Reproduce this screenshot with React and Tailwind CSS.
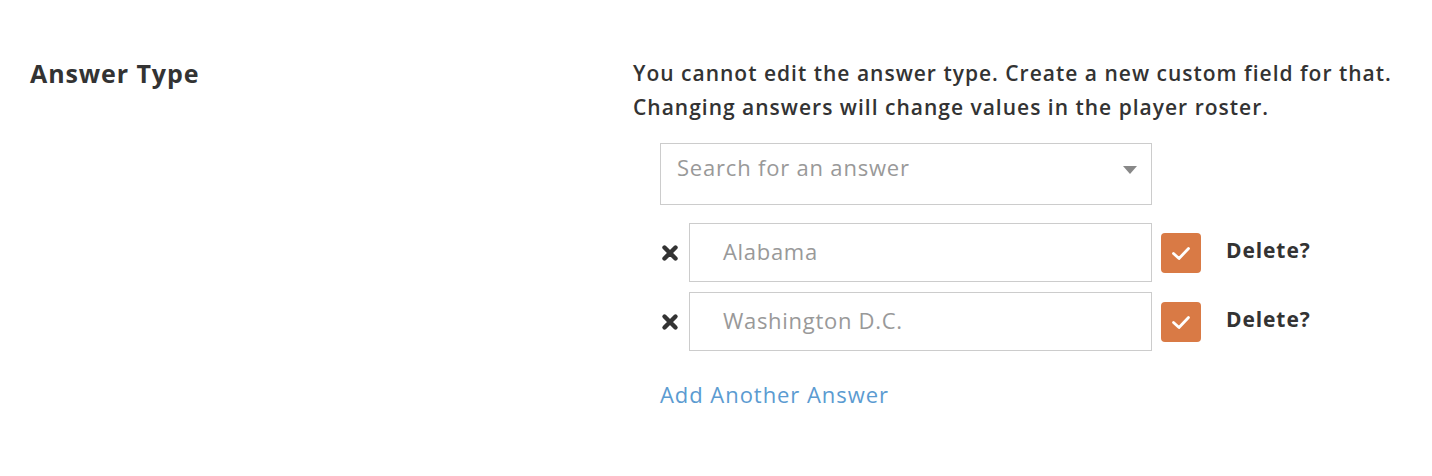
import React from 'react';

const answers = ['Alabama', 'Washington D.C.'];

const AnswerRow = ({ value }) => (
  <div className="flex items-center">
    <span className="w-[29px] shrink-0 pl-[1px] text-[#333]">
      <svg width="18" height="18" viewBox="0 0 18 18">
        <path d="M3.5 3.5 L14.5 14.5 M14.5 3.5 L3.5 14.5" stroke="#333" strokeWidth="4.4" strokeLinecap="round" />
      </svg>
    </span>
    <div className="flex h-[59px] w-[463px] items-center border border-[#ccc] pb-[2px] pl-[33px] text-[22px] tracking-[0.7px] text-[#999]">
      {value}
    </div>
    <span className="ml-[9px] flex h-[40px] w-[40px] items-center justify-center rounded-[4px] bg-[#d97a45]">
      <svg width="22" height="18" viewBox="0 0 22 18">
        <path d="M3.5 9.5 L9 14.5 L18.5 4.5" fill="none" stroke="#fff" strokeWidth="2.8" strokeLinecap="round" strokeLinejoin="round" />
      </svg>
    </span>
    <span className="ml-[25px] pb-[3px] text-[21px] font-bold tracking-[0.9px] text-[#333]">Delete?</span>
  </div>
);

export default function App() {
  return (
    <div className="flex bg-white pt-[56px] pl-[30px] font-['Open_Sans',sans-serif] text-[#333]">
      <div className="w-[603px] shrink-0 text-[25px] font-bold leading-[34px] tracking-[0.9px]">Answer Type</div>
      <div className="flex flex-col">
        <p className="text-[21px] font-semibold leading-[34px] tracking-[1px]">
          You cannot edit the answer type. Create a new custom field for that.
          <br />
          Changing answers will change values in the player roster.
        </p>
        <div className="ml-[27px] mt-[19px] flex flex-col">
          <div className="flex h-[62px] w-[492px] justify-between border border-[#ccc] pl-[16px] pr-[14px] pt-[7px] text-[22px] tracking-[0.8px] text-[#999]">
            <span>Search for an answer</span>
            <svg className="mt-[15px]" width="14" height="8" viewBox="0 0 14 8">
              <path d="M0 0 H14 L7 8 Z" fill="#888" />
            </svg>
          </div>
          <div className="mt-[18px] flex flex-col gap-[10px]">
            {answers.map((a) => (
              <AnswerRow key={a} value={a} />
            ))}
          </div>
          <a className="mt-[27px] text-[22px] tracking-[0.95px] text-[#5b9bd1]" href="#">Add Another Answer</a>
        </div>
      </div>
    </div>
  );
}
